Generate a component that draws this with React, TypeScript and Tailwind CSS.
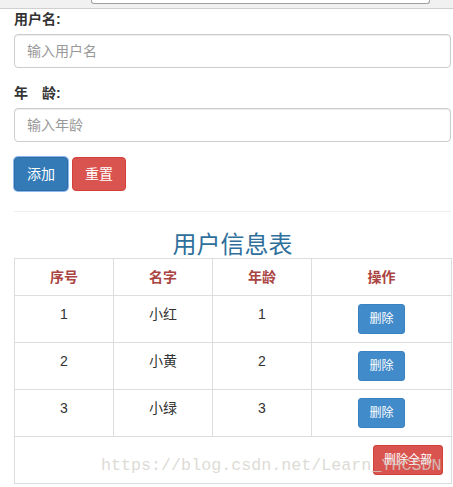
const users = [
  { id: 1, name: '小红', age: 1 },
  { id: 2, name: '小黄', age: 2 },
  { id: 3, name: '小绿', age: 3 },
]

export default function App() {
  return (
    <div
      className="relative w-[453px] h-[487px] overflow-hidden bg-white text-[14px] text-[#333]"
      style={{ fontFamily: '"Liberation Sans", "Noto Sans CJK SC", sans-serif' }}
    >
      {/* browser strip at the top */}
      <div className="h-[9px] bg-[#f1f1f1] border-b border-[#cfcfcf]">
        <div className="ml-[91px] w-[339px] h-[4px] bg-white border border-t-0 border-[#a0a0a0] rounded-b-[3px]" />
      </div>

      <div className="pl-[14px] pr-[2px]">
        {/* form */}
        <div className="mb-[15px]">
          <label className="block font-bold leading-5 mb-[5px]">用户名:</label>
          <input
            placeholder="输入用户名"
            className="block w-full h-[34px] px-3 rounded-[4px] border border-[#ccc] shadow-[inset_0_1px_1px_rgba(0,0,0,0.075)] placeholder:text-[#999] outline-none"
          />
        </div>
        <div className="mb-[15px]">
          <label className="block font-bold leading-5 mb-[5px]">年&emsp;龄:</label>
          <input
            placeholder="输入年龄"
            className="block w-full h-[34px] px-3 rounded-[4px] border border-[#ccc] shadow-[inset_0_1px_1px_rgba(0,0,0,0.075)] placeholder:text-[#999] outline-none"
          />
        </div>
        <div className="flex gap-[4px]">
          <button className="h-[34px] w-[54px] rounded-[4px] bg-[#337ab7] border border-[#2e6da4] text-white ring-1 ring-[#8fb8ee] leading-5">
            添加
          </button>
          <button className="h-[34px] w-[54px] rounded-[4px] bg-[#d9534f] border border-[#d43f3a] text-white leading-5">
            重置
          </button>
        </div>

        <hr className="mt-[20px] border-t border-[#eee]" />

        {/* table */}
        <h3 className="mt-[20px] text-center text-[24px] leading-[26px] text-[#2f6f9c]">用户信息表</h3>
        <table className="w-[437px] table-fixed border-collapse border border-[#ddd]">
          <colgroup>
            <col className="w-[99px]" />
            <col className="w-[99px]" />
            <col className="w-[99px]" />
            <col className="w-[140px]" />
          </colgroup>
          <thead>
            <tr className="text-[#a94442] font-bold">
              <th className="border border-[#ddd] p-2 leading-5">序号</th>
              <th className="border border-[#ddd] p-2 leading-5">名字</th>
              <th className="border border-[#ddd] p-2 leading-5">年龄</th>
              <th className="border border-[#ddd] p-2 leading-5">操作</th>
            </tr>
          </thead>
          <tbody>
            {users.map((u) => (
              <tr key={u.id}>
                <td className="border border-[#ddd] p-2 leading-5 text-center align-top">{u.id}</td>
                <td className="border border-[#ddd] p-2 leading-5 text-center align-top">{u.name}</td>
                <td className="border border-[#ddd] p-2 leading-5 text-center align-top">{u.age}</td>
                <td className="border border-[#ddd] p-2 leading-5 text-center align-top">
                  <button className="h-[30px] px-[10px] text-[12px] leading-[18px] rounded-[3px] bg-[#428bca] border border-[#3b82c0] text-white align-top">
                    删除
                  </button>
                </td>
              </tr>
            ))}
            <tr>
              <td colSpan={4} className="border border-[#ddd] p-2 leading-5 text-right align-top">
                <button className="h-[30px] px-[10px] text-[12px] leading-[18px] rounded-[3px] bg-[#d9534f] border border-[#d43f3a] text-white align-top">
                  删除全部
                </button>
              </td>
            </tr>
          </tbody>
        </table>
      </div>

      {/* watermark */}
      <div
        className="absolute left-[101px] top-[456px] text-[16.7px] leading-5 text-[#d4d2ca]/80 pointer-events-none whitespace-nowrap"
        style={{ fontFamily: '"Liberation Mono", monospace' }}
      >
        https://blog.csdn.net/Learn_YHCSDN
      </div>
    </div>
  )
}
